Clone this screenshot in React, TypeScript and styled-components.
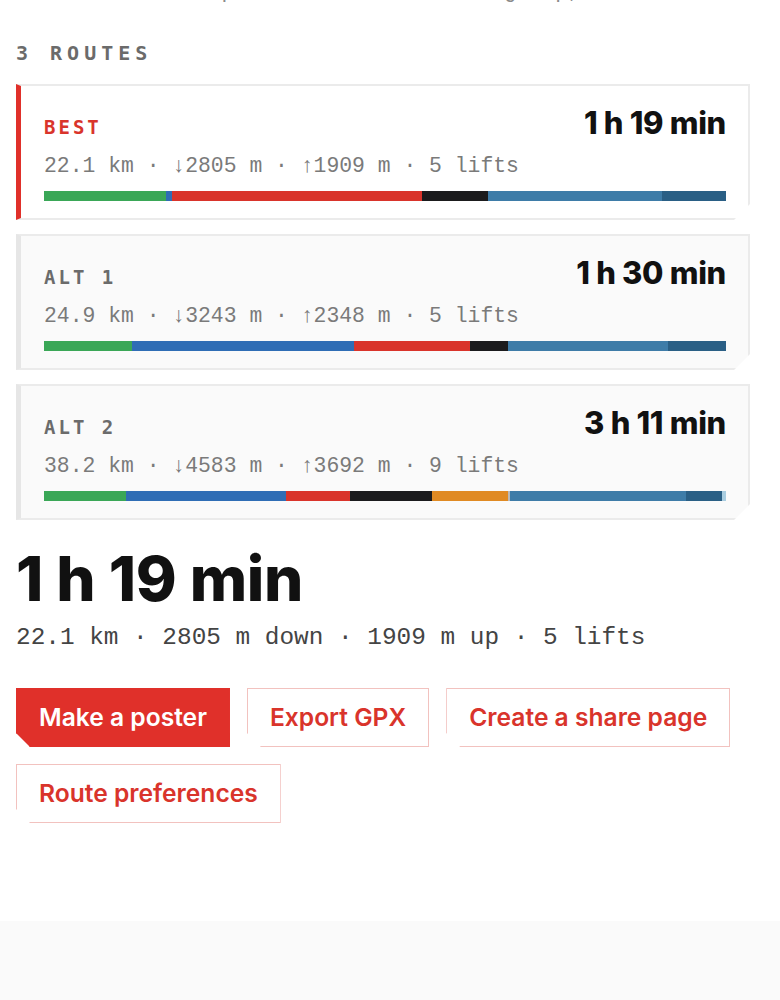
import React from 'react';
import styled, { createGlobalStyle } from 'styled-components';

type Segment = { color: string; w: number };

interface Route {
  label: string;
  time: string;
  stats: string;
  best?: boolean;
  segments: Segment[];
}

const C = {
  green: '#3aa757',
  blue: '#2f6db5',
  red: '#d9342b',
  black: '#1b1b1d',
  steel: '#3e7ca8',
  dark: '#2a5f85',
  orange: '#e08a23',
  grey: '#b9b9b9',
  light: '#a9cde0',
};

const routes: Route[] = [
  {
    label: 'BEST',
    time: '1 h 19 min',
    stats: '22.1 km · ↓2805 m · ↑1909 m · 5 lifts',
    best: true,
    segments: [
      { color: C.green, w: 122 },
      { color: C.blue, w: 6 },
      { color: C.red, w: 250 },
      { color: C.black, w: 66 },
      { color: C.steel, w: 174 },
      { color: C.dark, w: 64 },
    ],
  },
  {
    label: 'ALT 1',
    time: '1 h 30 min',
    stats: '24.9 km · ↓3243 m · ↑2348 m · 5 lifts',
    segments: [
      { color: C.green, w: 88 },
      { color: C.blue, w: 222 },
      { color: C.red, w: 116 },
      { color: C.black, w: 38 },
      { color: C.steel, w: 160 },
      { color: C.dark, w: 58 },
    ],
  },
  {
    label: 'ALT 2',
    time: '3 h 11 min',
    stats: '38.2 km · ↓4583 m · ↑3692 m · 9 lifts',
    segments: [
      { color: C.green, w: 82 },
      { color: C.blue, w: 160 },
      { color: C.red, w: 64 },
      { color: C.black, w: 82 },
      { color: C.orange, w: 76 },
      { color: C.grey, w: 2 },
      { color: C.steel, w: 176 },
      { color: C.dark, w: 36 },
      { color: C.light, w: 4 },
    ],
  },
];

const GlobalStyle = createGlobalStyle`
  html, body {
    margin: 0;
    padding: 0;
    background: #ffffff;
  }
  body {
    font-family: Inter, "Noto Sans", sans-serif;
    overflow: hidden;
  }
`;

const mono = `"Liberation Mono", "DejaVu Sans Mono", monospace`;
const monoBold = `"DejaVu Sans Mono", "Liberation Mono", monospace`;

const Page = styled.div`
  display: flex;
  flex-direction: column;
  min-height: 1000px;
`;

const Main = styled.main`
  display: flex;
  flex-direction: column;
  padding: 0 30px 98px 16px;
`;

// last line of the intro paragraph, scrolled mostly out of view
const Intro = styled.p`
  margin: -23px 0 0;
  font-family: ${mono};
  font-size: 21.4px;
  line-height: 28px;
  color: #8a8a8a;
  white-space: nowrap;
`;

const SectionLabel = styled.h2`
  margin: 36px 0 19px;
  font-family: ${monoBold};
  font-weight: 700;
  font-size: 20px;
  line-height: 24px;
  letter-spacing: 5px;
  color: #6b6b6b;
`;

const RouteList = styled.div`
  display: flex;
  flex-direction: column;
  gap: 14px;
`;

const Card = styled.div<{ $best?: boolean }>`
  display: flex;
  flex-direction: column;
  padding: 18px 22px 17px 23px;
  background: ${p => (p.$best ? '#ffffff' : '#fafafa')};
  border: 2px solid #ebebeb;
  border-left: 5px solid ${p => (p.$best ? '#e0302a' : '#e6e6e6')};
  clip-path: polygon(0 0, 100% 0, 100% calc(100% - 16px), calc(100% - 16px) 100%, 0 100%);
`;

const CardHead = styled.div`
  display: flex;
  justify-content: space-between;
  align-items: baseline;
`;

const Tag = styled.span<{ $best?: boolean }>`
  font-family: ${monoBold};
  font-weight: 700;
  font-size: 19px;
  letter-spacing: 3px;
  color: ${p => (p.$best ? '#d9342b' : '#6b6b6b')};
`;

const Time = styled.span`
  font-family: Inter, sans-serif;
  font-weight: 800;
  font-size: 31px;
  line-height: 37px;
  letter-spacing: -0.01em;
  color: #111111;
`;

const Stats = styled.div`
  margin-top: 11px;
  font-family: ${mono};
  font-size: 21.4px;
  line-height: 28px;
  color: #7a7a7a;
  white-space: nowrap;
`;

const Bar = styled.div`
  display: flex;
  height: 10px;
  margin-top: 11px;
`;

const Seg = styled.div<{ $c: string }>`
  background: ${p => p.$c};
  height: 100%;
`;

const BigTime = styled.h1`
  margin: 25px 0 0;
  font-family: Inter, sans-serif;
  font-weight: 800;
  font-size: 62px;
  line-height: 68px;
  letter-spacing: -0.005em;
  color: #111111;
`;

const Summary = styled.div`
  margin-top: 9px;
  font-family: ${mono};
  font-size: 24.4px;
  line-height: 32px;
  color: #444444;
  white-space: nowrap;
`;

const Actions = styled.div`
  display: flex;
  flex-wrap: wrap;
  gap: 17px;
  margin-top: 34px;
`;

const Button = styled.button<{ $primary?: boolean }>`
  font-family: Inter, sans-serif;
  font-weight: 600;
  font-size: 24.6px;
  line-height: 29px;
  padding: 14px 22px;
  border: 1px solid ${p => (p.$primary ? '#e0302a' : '#f2c2bf')};
  background: ${p => (p.$primary ? '#e0302a' : '#ffffff')};
  color: ${p => (p.$primary ? '#ffffff' : '#d9342b')};
  cursor: pointer;
  clip-path: polygon(0 0, 100% 0, 100% 100%, 14px 100%, 0 calc(100% - 14px));
`;

const Footer = styled.footer`
  flex: 1;
  background: #fafafa;
`;

export default function App() {
  const total = (r: Route) => r.segments.reduce((s, x) => s + x.w, 0);
  return (
    <Page>
      <GlobalStyle />
      <Main>
        <Intro>Routes the tool planned for the whole group, best first.</Intro>
        <SectionLabel>3 ROUTES</SectionLabel>
        <RouteList>
          {routes.map(r => (
            <Card key={r.label} $best={r.best}>
              <CardHead>
                <Tag $best={r.best}>{r.label}</Tag>
                <Time>{r.time}</Time>
              </CardHead>
              <Stats>{r.stats}</Stats>
              <Bar>
                {r.segments.map((s, i) => (
                  <Seg key={i} $c={s.color} style={{ width: `${(s.w / total(r)) * 100}%` }} />
                ))}
              </Bar>
            </Card>
          ))}
        </RouteList>
        <BigTime>1 h 19 min</BigTime>
        <Summary>22.1 km · 2805 m down · 1909 m up · 5 lifts</Summary>
        <Actions>
          <Button $primary>Make a poster</Button>
          <Button>Export GPX</Button>
          <Button>Create a share page</Button>
          <Button>Route preferences</Button>
        </Actions>
      </Main>
      <Footer />
    </Page>
  );
}
